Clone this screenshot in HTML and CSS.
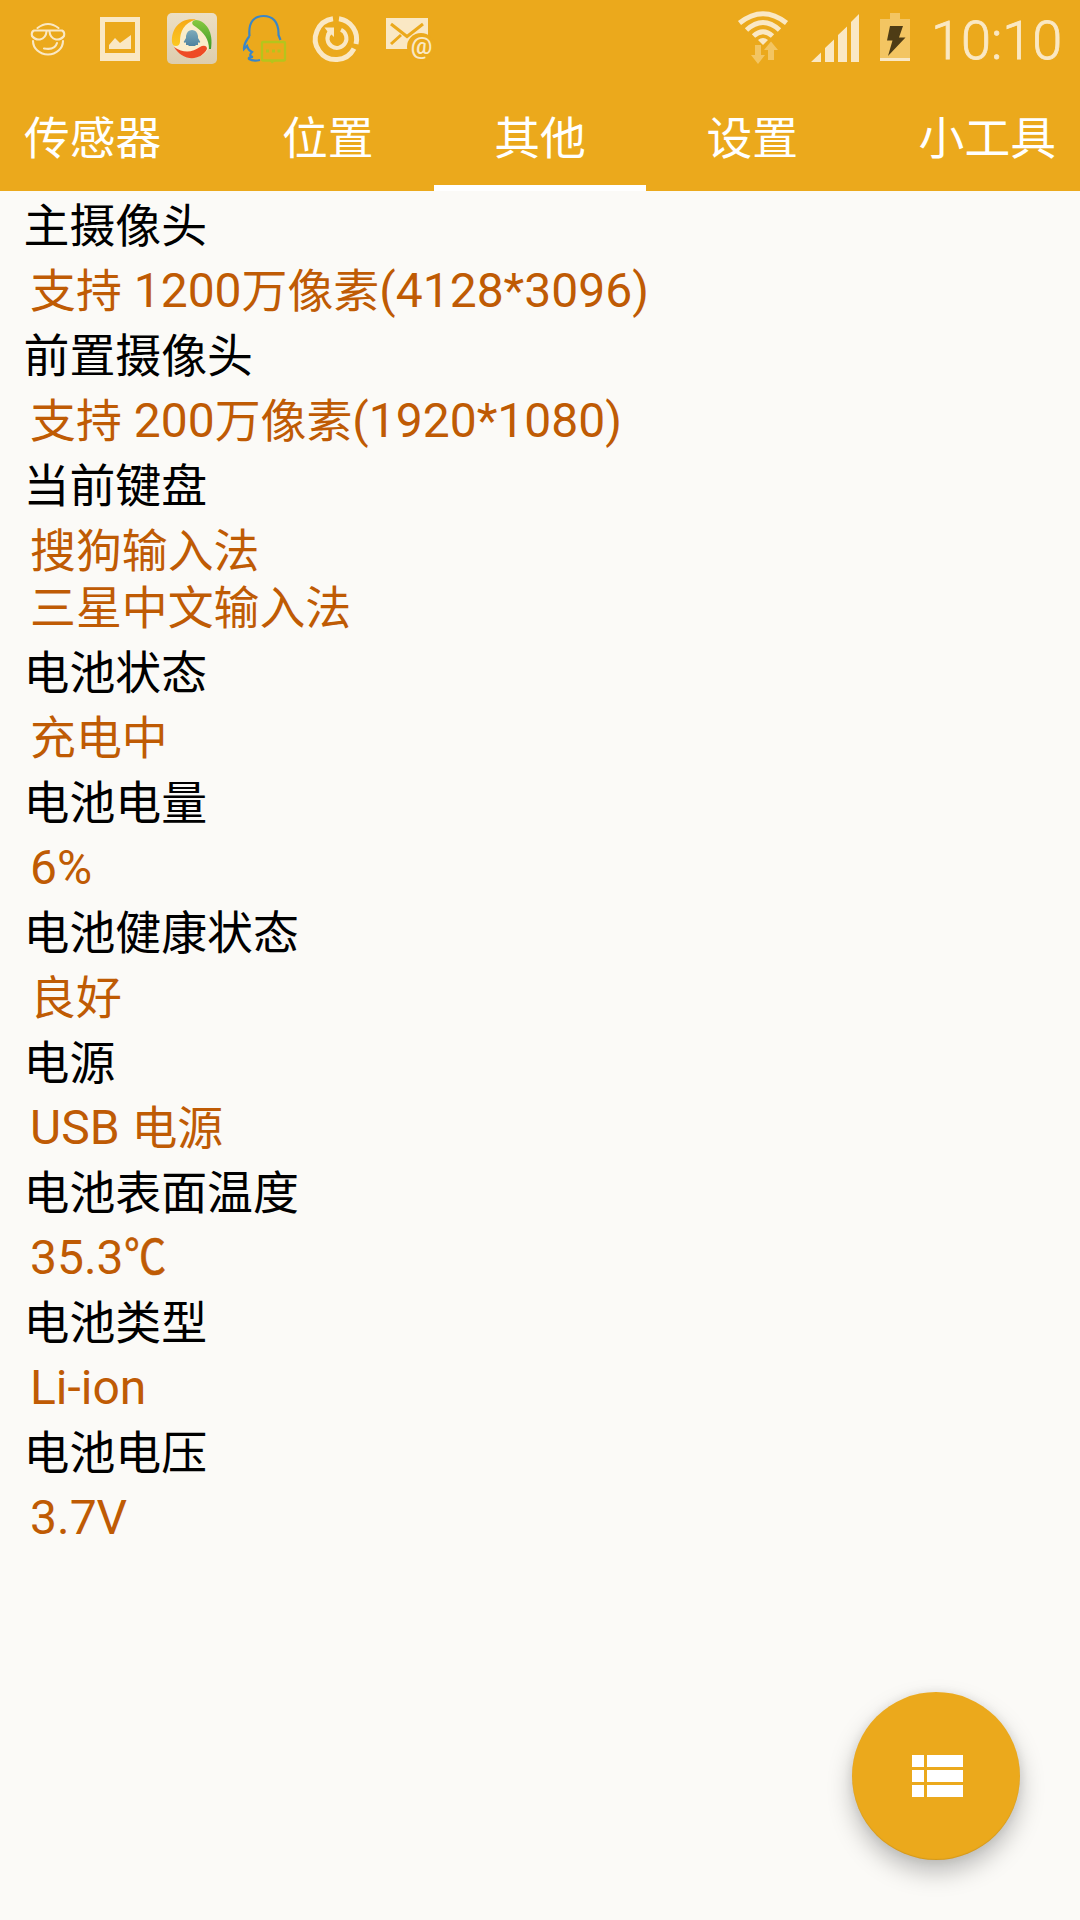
FILE: index.html
```html
<!DOCTYPE html>
<html lang="zh-CN">
<head>
    <meta charset="UTF-8">
    <meta name="viewport" content="width=device-width, initial-scale=1.0">
    <title>其他</title>
    <link rel="stylesheet" href="styles.css">
</head>
<body>
    <header class="header">
        <!-- Status bar -->
        <div class="status-bar">
            <div class="status-icons">
                <svg width="72" height="76" viewBox="12 0 72 76" fill="none" stroke="#fae8c4" stroke-width="2.1" stroke-linecap="round">
                    <path d="M37.500 28Q48 20 58.500 28M33 41a15 13.500 0 0 0 30 0M44 48.500q11 2 13-5.500"/>
                    <path d="M34 30.500H62Q65 32 64 36Q61 40 56 39.500Q50 38 49.500 31.500M34 30.500Q31 32 32 36Q35 40 40 39.500Q46 38 46.500 31.500"/>
                </svg>
                <svg width="72" height="76" viewBox="84 0 72 76" fill="#fae8c4">
                    <path fill-rule="evenodd" d="M100 17h40v44h-40zM105 22v31h30V22z"/>
                    <path d="M109 49v-4l6-7 5 5 11-8v14z"/>
                </svg>
                <svg width="72" height="76" viewBox="156 0 72 76">
                    <defs>
                        <linearGradient id="tile" x2="0" y2="1"><stop stop-color="#ecdfc4"/><stop offset="1" stop-color="#ddcdae"/></linearGradient>
                        <linearGradient id="yellow" x2="0" y2="1"><stop stop-color="#f6a916"/><stop offset="1" stop-color="#fbc822"/></linearGradient>
                        <linearGradient id="green" x2="0" y2="1"><stop stop-color="#86c940"/><stop offset="1" stop-color="#3f9a28"/></linearGradient>
                        <linearGradient id="blue" x2="0" y2="1"><stop stop-color="#7eabba"/><stop offset="1" stop-color="#4e82a0"/></linearGradient>
                    </defs>
                    <rect x="167" y="13" width="50" height="51" rx="5" fill="url(#tile)"/>
                    <circle cx="192" cy="39" r="19" fill="#faecc9"/>
                    <path d="M196 19.500C181 17 171 28 172 42q.5 4 4 4 3.500 0 4-4c0-11 4-19 16-22.500z" fill="url(#yellow)"/>
                    <path d="M196 20c10 1 18 12 15 29h-2c0-10-5-16-13-22-6-3-4-7 0-7z" fill="url(#green)"/>
                    <path d="M174 47c8 14 26 15 33 2 0-4-4-4-7-2-7 5-16 7-26 0z" fill="#ee4a25"/>
                    <path d="M186 38v-2q1-6 6-6t6 6v2l2.300 4-1.300 1-1-1v3h-2.500v1h-7v-1H186v-3l-1 1-1.300-1z" fill="url(#blue)"/>
                </svg>
                <svg width="72" height="76" viewBox="228 0 72 76" fill="none" stroke-width="2.200">
                    <path stroke="#3a86c8" d="M249.500 36C248 21 255 16 263.500 16S279 21 278.500 35l2 5M249.500 36q-6 8-5.500 13l3-3q1 4 5 6-4 4 1 5-5 0-4 2 4 2.500 11 1"/>
                    <rect stroke="#b5c51c" stroke-width="2.300" x="262" y="42" width="23" height="18.500" rx="1"/>
                    <path fill="#b5c51c" stroke="none" d="M269 60l3 3.500 5-3.500zM266 49.500h3v3h-3zm6 0h3v3h-3zm5.500 0h3v3h-3z"/>
                </svg>
                <svg width="72" height="76" viewBox="300 0 72 76" fill="none" stroke="#fae8c4" stroke-width="5">
                    <path d="M333 18.800A20.500 20.500 0 1 0 354 48.600M339 18.800A20.500 20.500 0 0 1 356 44"/>
                    <path stroke-width="4" d="M341 29.800A9.500 9.500 0 1 1 329.500 32.500"/>
                    <path fill="#fae8c4" stroke="none" d="M324.500 27.500h9.500V37l-2.500-2.500-3 3-2-4 1-2z"/>
                </svg>
                <svg width="72" height="76" viewBox="372 0 72 76">
                    <path fill="#fae8c4" d="M386 18h42v31h-42z"/>
                    <path fill="none" stroke="#eba91c" stroke-width="3" d="M391 24l16 12.500L423 24M391 44l10-9"/>
                    <circle cx="421" cy="47" r="14" fill="#eba91c"/>
                    <text class="at-sign" x="421.500" y="54" text-anchor="middle">@</text>
                </svg>
            </div>
            <div class="status-icons">
                <svg width="72" height="76" viewBox="728 0 72 76" fill="none" stroke="#fae8c4" stroke-width="5">
                    <path d="M739.500 23Q763 4.500 786.500 23M746.500 30Q763 15 779.500 30M753.500 36Q763 27.500 772.500 36"/>
                    <path fill="#fae8c4" stroke="none" d="M758 40q5-4 10 0l-5 5z"/>
                    <path fill="#f3c562" stroke="none" d="M755 45h6v10h4l-7 9-7-9h4zM771 41.500l7 8.500h-4v10h-6V50h-4z"/>
                </svg>
                <svg width="72" height="76" viewBox="800 0 72 76" fill="#fae8c4">
                    <path d="M811 62l10-9.500V62zM825 48l9-8.500V62h-9zM838 35l9-8.500V62h-9zM851 22l8-8v48h-8z"/>
                </svg>
                <svg width="52" height="76" viewBox="872 0 52 76">
                    <path fill="#f3c562" d="M890 13h10v6h10v39h-30V19h10z"/>
                    <path fill="#fae8c4" d="M880 58h30v3h-30z"/>
                    <path fill="#4e3c15" d="M890 26h13l-4 11.500h6.500L888 56l4.500-15.500H887z"/>
                </svg>
                <span class="clock">10:10</span>
            </div>
        </div>
        <!-- Tabs -->
        <nav class="tabs">
            <a class="tab">传感器</a>
            <a class="tab">位置</a>
            <a class="tab active">其他</a>
            <a class="tab">设置</a>
            <a class="tab">小工具</a>
        </nav>
    </header>

    <dl class="info">
        <dt>主摄像头</dt>
        <dd><span class="cn">支持</span> 1200<span class="cn">万像素</span>(4128*3096)</dd>
        <dt>前置摄像头</dt>
        <dd><span class="cn">支持</span> 200<span class="cn">万像素</span>(1920*1080)</dd>
        <dt>当前键盘</dt>
        <dd><span class="cn">搜狗输入法</span><br><span class="cn">三星中文输入法</span></dd>
        <dt>电池状态</dt>
        <dd><span class="cn">充电中</span></dd>
        <dt>电池电量</dt>
        <dd>6%</dd>
        <dt>电池健康状态</dt>
        <dd><span class="cn">良好</span></dd>
        <dt>电源</dt>
        <dd>USB <span class="cn">电源</span></dd>
        <dt>电池表面温度</dt>
        <dd>35.3<span class="unit">℃</span></dd>
        <dt>电池类型</dt>
        <dd>Li-ion</dd>
        <dt>电池电压</dt>
        <dd>3.7V</dd>
    </dl>

    <!-- Floating button -->
    <button class="fab" aria-label="列表">
        <svg width="51" height="42" viewBox="0 0 51 42" fill="#fff">
            <path d="M0 0h12v12H0zM15 0h36v12H15zM0 15h12v12H0zM15 15h36v12H15zM0 30h12v12H0zM15 30h36v12H15z"/>
        </svg>
    </button>
</body>
</html>
```
FILE: styles.css
```css
* {
    box-sizing: border-box;
}
body {
    margin: 0;
    min-height: 100vh;
    background-color: #fbfaf7;
    font-family: Roboto, "Noto Sans CJK SC", sans-serif;
    font-size: 48px;
    overflow: hidden;
}
.header {
    height: 191px;
    background-color: #eba91c;
}
.status-bar {
    display: flex;
    justify-content: space-between;
    height: 76px;
    padding: 0 19px 0 12px;
}
.status-icons {
    display: flex;
}
.clock {
    width: 137px;
    padding-left: 7px;
    font-size: 54px;
    font-weight: 300;
    line-height: 82px;
    color: #fae8c4;
    white-space: nowrap;
    -webkit-text-stroke: 0.8px #fae8c4;
}
.at-sign {
    font-size: 24px;
    font-weight: 500;
    fill: #fae8c4;
}
.tabs {
    display: flex;
    justify-content: space-between;
    height: 115px;
    padding: 0 24px;
}
.tab {
    position: relative;
    font-size: 45.8px;
    line-height: 127px;
    color: #fff;
}
.tab.active::after {
    content: "";
    position: absolute;
    left: 50%;
    bottom: 0;
    width: 212px;
    height: 6px;
    margin-left: -106px;
    background-color: #fff;
}
.info {
    margin: 0;
    padding-top: 2px;
}
.info dt {
    height: 65px;
    padding-left: 23.5px;
    font-size: 45.9px;
    line-height: 66px;
    color: #000;
}
.info dd {
    margin: 0;
    padding: 4px 0 4px 30px;
    line-height: 57px;
    color: #bf5b04;
}
.cn {
    font-size: 45.9px;
    line-height: 1;
}
.unit {
    display: inline-block;
    line-height: 1;
    transform: scaleX(0.88);
    transform-origin: left;
    -webkit-text-stroke: 0.6px #bf5b04;
}
.fab {
    position: fixed;
    right: 60px;
    bottom: 60px;
    display: flex;
    align-items: center;
    justify-content: center;
    width: 168px;
    height: 168px;
    padding: 0 0 0 2px;
    border: none;
    border-radius: 50%;
    background-color: #eba91c;
    box-shadow: 0 12px 24px rgba(0, 0, 0, 0.25), 0 0 12px rgba(0, 0, 0, 0.08), inset 0 -1px 1px rgba(0, 0, 0, 0.1);
}
```
